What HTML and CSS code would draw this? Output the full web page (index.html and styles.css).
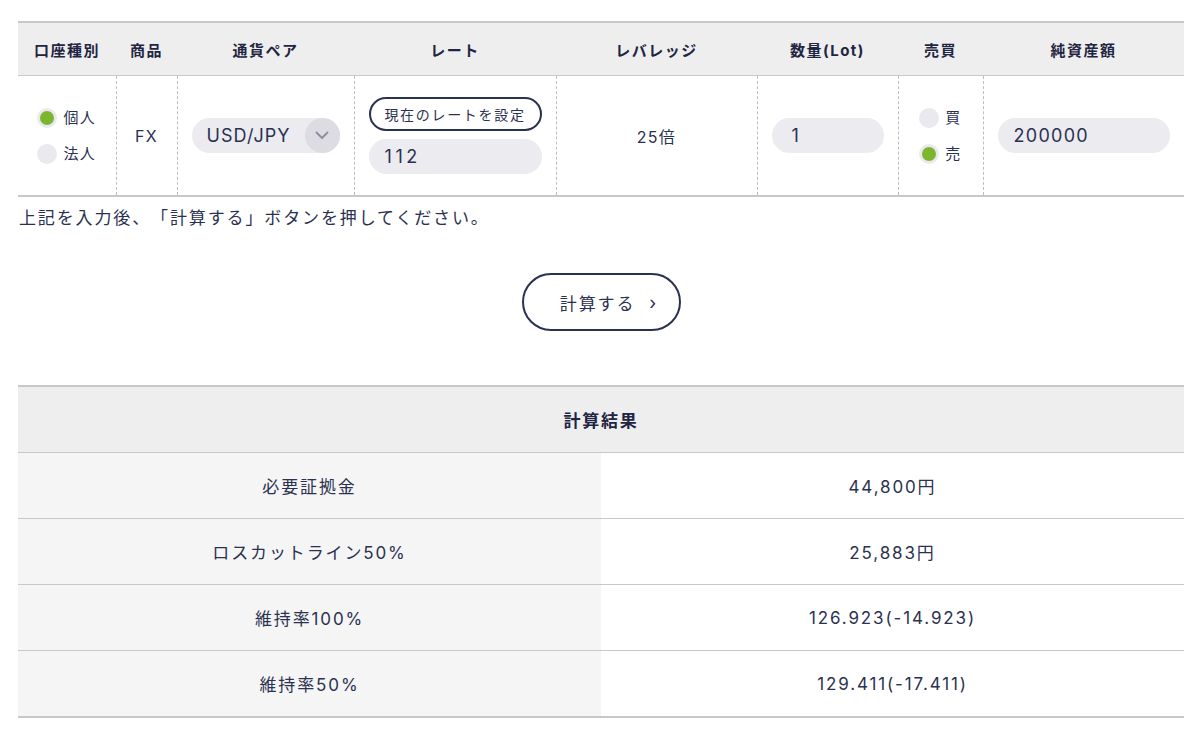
FILE: index.html
```html
<!DOCTYPE html>
<html lang="ja">
<head>
    <meta charset="UTF-8">
    <meta name="viewport" content="width=device-width, initial-scale=1.0">
    <title>証拠金計算</title>
    <link rel="stylesheet" href="styles.css">
</head>
<body>
    <div class="wrap">
        <table class="input-table">
            <colgroup>
                <col style="width:98px"><col style="width:61px"><col style="width:177px"><col style="width:202px">
                <col style="width:201px"><col style="width:141px"><col style="width:85px"><col style="width:201px">
            </colgroup>
            <thead>
                <tr><th>口座種別</th><th>商品</th><th>通貨ペア</th><th>レート</th><th>レバレッジ</th><th>数量(Lot)</th><th>売買</th><th>純資産額</th></tr>
            </thead>
            <tbody>
                <tr>
                    <td>
                        <div class="radios">
                            <label class="radio"><span class="dot checked"></span>個人</label>
                            <label class="radio"><span class="dot"></span>法人</label>
                        </div>
                    </td>
                    <td>FX</td>
                    <td>
                        <div class="select">
                            <span>USD/JPY</span>
                            <span class="arrow"><svg width="14" height="9" viewBox="0 0 14 9"><path d="M1.5 1.5 L7 7 L12.5 1.5" fill="none" stroke="#8a8e9c" stroke-width="1.8" stroke-linecap="round" stroke-linejoin="round"/></svg></span>
                        </div>
                    </td>
                    <td>
                        <div class="rate">
                            <button class="rate-btn">現在のレートを設定</button>
                            <div class="field rate-val">112</div>
                        </div>
                    </td>
                    <td>25倍</td>
                    <td><div class="field lot">1</div></td>
                    <td>
                        <div class="radios">
                            <label class="radio"><span class="dot"></span>買</label>
                            <label class="radio"><span class="dot checked"></span>売</label>
                        </div>
                    </td>
                    <td><div class="field asset">200000</div></td>
                </tr>
            </tbody>
        </table>

        <p class="note">上記を入力後、「計算する」ボタンを押してください。</p>

        <div class="calc">
            <button class="calc-btn">計算する<span class="chev">›</span></button>
        </div>

        <table class="result-table">
            <thead><tr><th colspan="2">計算結果</th></tr></thead>
            <tbody>
                <tr><td class="key">必要証拠金</td><td>44,800円</td></tr>
                <tr><td class="key">ロスカットライン50%</td><td>25,883円</td></tr>
                <tr><td class="key">維持率100%</td><td>126.923(-14.923)</td></tr>
                <tr><td class="key">維持率50%</td><td>129.411(-17.411)</td></tr>
            </tbody>
        </table>
    </div>
</body>
</html>
```

FILE: styles.css
```css
body {
    margin: 0;
    font-family: Inter, "Noto Sans CJK JP", sans-serif;
    color: #2b3150;
    background: #fff;
    letter-spacing: 0.08em;
    text-spacing-trim: space-all;
}
.wrap {
    width: 1166px;
    padding: 21px 0 0 18px;
}
table {
    width: 100%;
    border-collapse: collapse;
    table-layout: fixed;
}
.input-table {
    border-top: 2px solid #c8c8c8;
    border-bottom: 2px solid #c8c8c8;
}
.input-table th {
    background: #eeeeee;
    height: 52px;
    padding: 0;
    font-size: 15px;
    font-weight: bold;
    color: #1f2542;
    border-bottom: 1px solid #c8c8c8;
    letter-spacing: 0.1em;
}
.input-table td {
    height: 119px;
    padding: 0;
    text-align: center;
    font-size: 16px;
    border-left: 1px dashed #bdbdbd;
}
.input-table td:first-child {
    border-left: none;
}
.radios {
    display: flex;
    flex-direction: column;
    align-items: center;
    gap: 15px;
}
.radio {
    display: flex;
    align-items: center;
    gap: 6px;
    font-size: 15px;
    line-height: 21px;
}
.dot {
    width: 20px;
    height: 20px;
    border-radius: 50%;
    background: #e9e9ef;
    box-sizing: border-box;
}
.dot.checked {
    background: #7db52f;
    border: 3px solid #e9e9ef;
}
.select {
    margin: 0 14px;
    height: 35px;
    border-radius: 18px;
    background: #ebebf0;
    display: flex;
    align-items: center;
    justify-content: space-between;
    font-size: 18px;
    padding-left: 15px;
    letter-spacing: 0.06em;
}
.arrow {
    width: 35px;
    height: 35px;
    border-radius: 50%;
    background: #dcdce2;
    display: flex;
    align-items: center;
    justify-content: center;
}
.rate {
    display: flex;
    flex-direction: column;
    gap: 8px;
    margin: 0 14px;
}
.rate-btn {
    height: 34px;
    border: 2px solid #2b3150;
    border-radius: 17px;
    background: #fff;
    color: #2b3150;
    font-family: inherit;
    font-size: 14px;
    letter-spacing: 0.12em;
    padding: 0;
}
.field {
    height: 35px;
    border-radius: 18px;
    background: #ebebf0;
    text-align: left;
    font-size: 18px;
    line-height: 35px;
    padding-left: 20px;
}
.field.rate-val {
    padding-left: 16px;
    letter-spacing: 0.2em;
}
.field.lot {
    margin: 0 14px;
}
.field.asset {
    margin: 0 14px;
    padding-left: 16px;
}
.note {
    margin: 8px 0 0 1px;
    font-size: 17px;
    line-height: 26px;
    letter-spacing: 0.11em;
}
.calc {
    display: flex;
    justify-content: center;
    margin-top: 42px;
}
.calc-btn {
    width: 159px;
    height: 58px;
    border: 2px solid #2b3150;
    border-radius: 29px;
    background: #fff;
    color: #2b3150;
    font-family: inherit;
    font-size: 17px;
    letter-spacing: 0.11em;
    padding: 0 0 0 16px;
    display: flex;
    align-items: center;
    justify-content: center;
    gap: 14px;
}
.chev {
    font-size: 18px;
}
.result-table {
    margin-top: 54px;
    border-top: 2px solid #c8c8c8;
    border-bottom: 2px solid #c8c8c8;
}
.result-table th {
    background: #eeeeee;
    height: 63px;
    font-size: 17px;
    font-weight: bold;
    color: #1f2542;
    border-bottom: 1px solid #c8c8c8;
    letter-spacing: 0.1em;
}
.result-table td {
    height: 65px;
    text-align: center;
    font-size: 17px;
    border-bottom: 1px solid #c8c8c8;
    padding: 0;
    letter-spacing: 0.11em;
}
.result-table td.key {
    background: #f5f5f5;
    width: 583px;
}
```
